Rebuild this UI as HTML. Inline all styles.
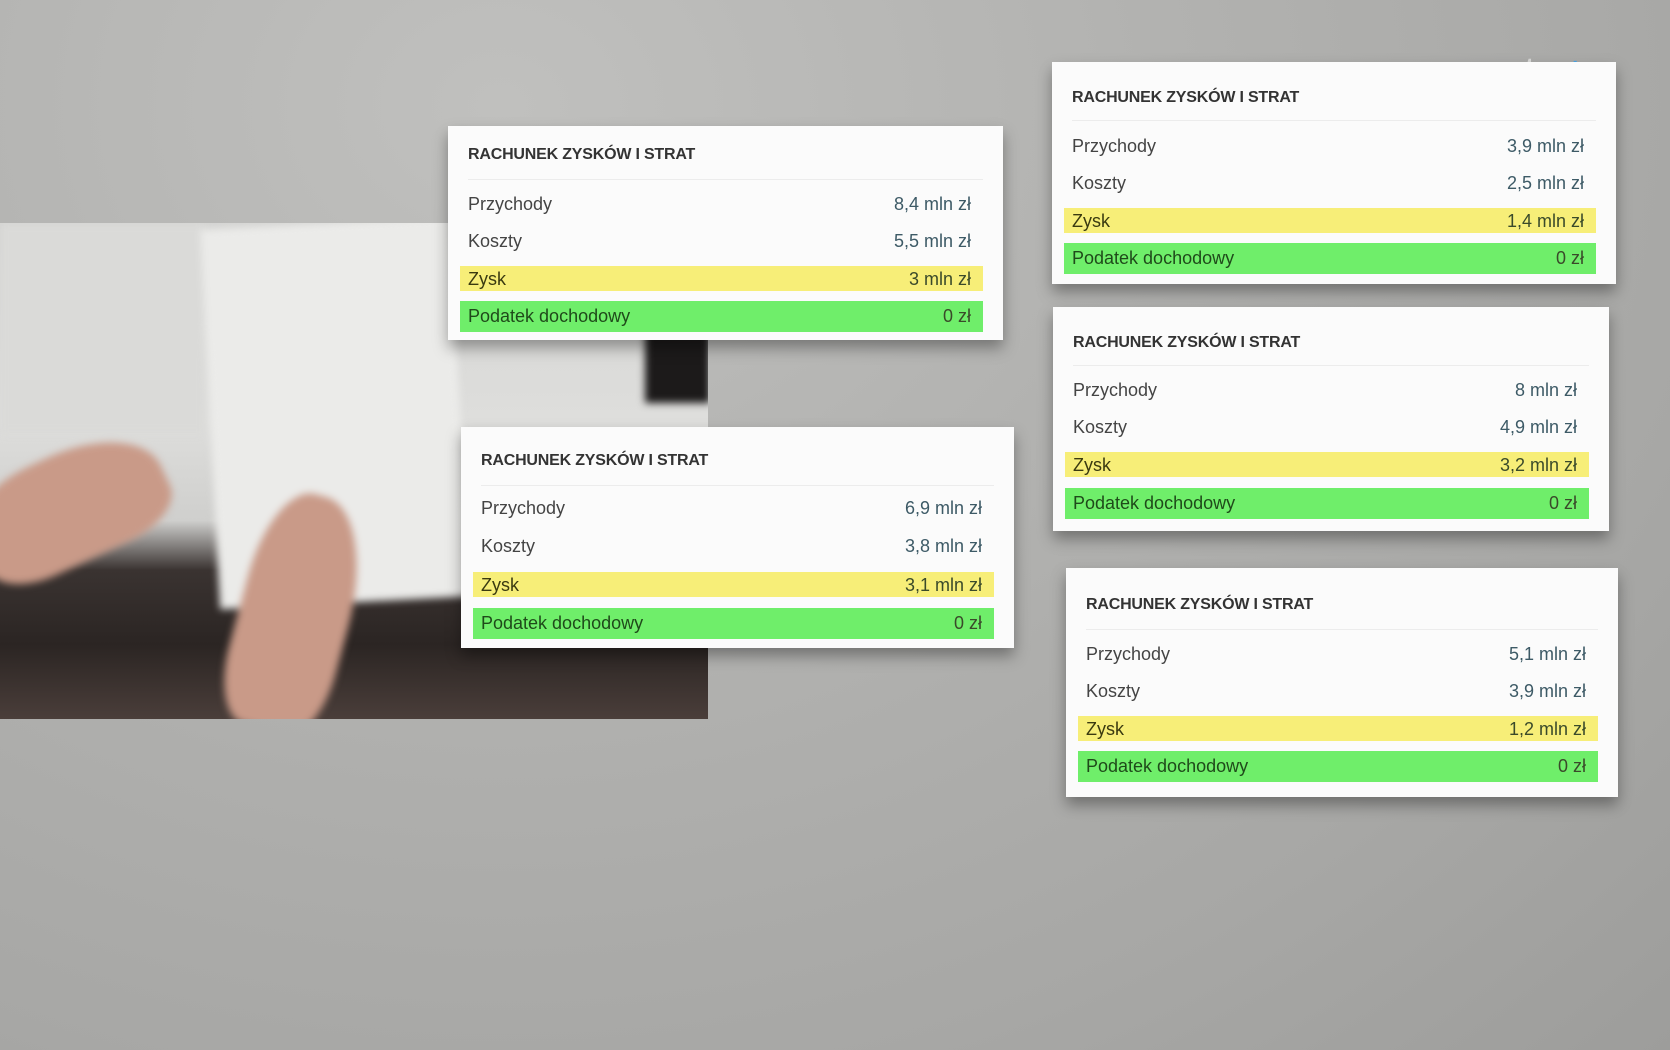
<!DOCTYPE html>
<html><head><meta charset="utf-8"><style>
*{margin:0;padding:0;box-sizing:border-box}
body{width:1670px;height:1050px;overflow:hidden;position:relative;font-family:"Liberation Sans",sans-serif;
background:radial-gradient(ellipse at 30% 10%,#c0c0be 0%,#b2b2b0 40%,#a7a7a5 75%,#9d9d9b 100%);}
.photo{position:absolute;left:0;top:223px;width:708px;height:496px;overflow:hidden;
background:linear-gradient(180deg,#d4d4d2 0%,#dededc 40%,#cfcfcd 60%,#3a3331 70%,#2b2523 85%,#4a3e3a 100%);}
.photo .in{position:absolute;inset:0;filter:blur(4px)}
.paper{position:absolute;left:210px;top:0;width:250px;height:380px;background:#ebebe9;transform:rotate(-3deg);}
.hand{position:absolute;background:#c99a88;border-radius:40% 50% 30% 30%;}
.card{position:absolute;background:#fbfbfb;box-shadow:0 8px 14px rgba(0,0,0,.35);}
.card .t{position:absolute;left:20px;top:20px;font-weight:bold;font-size:16px;color:#333;letter-spacing:-.2px}
.card .d{position:absolute;left:20px;right:20px;top:53px;height:1px;background:#ececec}
.row{position:absolute;left:12px;right:20px;height:26px;font-size:18px;line-height:26px;color:#444;padding:0 12px 0 8px;display:flex;justify-content:space-between}
.row span:last-child{color:#3d5a66}
.r1{top:65px}.r2{top:102px}
.y{top:140px;height:25px;background:#f7ee78;color:#3a3a10}
.g{top:175px;height:31px;line-height:31px;background:#6fee6a;color:#1f4a1a}
.y span:last-child,.g span:last-child{color:#3a4a2a}
.sh .t{top:27px}.sh .d{top:58px}
</style></head><body>
<div class="photo"><div class="in">
 <div class="paper" style="left:0;top:0;width:205px;height:210px;transform:none;background:#dadad8"></div>
 <div class="paper"></div>
 <div class="hand" style="left:-30px;top:230px;width:200px;height:110px;transform:rotate(-25deg)"></div>
 <div class="hand" style="left:240px;top:270px;width:110px;height:240px;transform:rotate(15deg)"></div>
 <div style="position:absolute;left:645px;top:100px;width:65px;height:80px;background:#1c1a1a"></div>
</div></div>
<div style="position:absolute;left:1525px;top:52px;color:rgba(255,255,255,.55);font-weight:bold;font-size:28px">tvn<span style="color:#4aa6e6">+</span></div>

<div class="card" style="left:448px;top:126px;width:555px;height:214px">
<div class="t">RACHUNEK ZYSKÓW I STRAT</div><div class="d"></div>
<div class="row r1"><span>Przychody</span><span>8,4 mln zł</span></div>
<div class="row r2"><span>Koszty</span><span>5,5 mln zł</span></div>
<div class="row y"><span>Zysk</span><span>3 mln zł</span></div>
<div class="row g"><span>Podatek dochodowy</span><span>0 zł</span></div></div>

<div class="card sh" style="left:461px;top:427px;width:553px;height:221px">
<div class="t" style="top:25px">RACHUNEK ZYSKÓW I STRAT</div><div class="d"></div>
<div class="row r1" style="top:68px"><span>Przychody</span><span>6,9 mln zł</span></div>
<div class="row r2" style="top:106px"><span>Koszty</span><span>3,8 mln zł</span></div>
<div class="row y" style="top:145px"><span>Zysk</span><span>3,1 mln zł</span></div>
<div class="row g" style="top:181px"><span>Podatek dochodowy</span><span>0 zł</span></div></div>

<div class="card sh" style="left:1052px;top:62px;width:564px;height:222px">
<div class="t">RACHUNEK ZYSKÓW I STRAT</div><div class="d"></div>
<div class="row r1" style="top:71px"><span>Przychody</span><span>3,9 mln zł</span></div>
<div class="row r2" style="top:108px"><span>Koszty</span><span>2,5 mln zł</span></div>
<div class="row y" style="top:146px"><span>Zysk</span><span>1,4 mln zł</span></div>
<div class="row g" style="top:181px"><span>Podatek dochodowy</span><span>0 zł</span></div></div>

<div class="card sh" style="left:1053px;top:307px;width:556px;height:224px">
<div class="t">RACHUNEK ZYSKÓW I STRAT</div><div class="d"></div>
<div class="row r1" style="top:70px"><span>Przychody</span><span>8 mln zł</span></div>
<div class="row r2" style="top:107px"><span>Koszty</span><span>4,9 mln zł</span></div>
<div class="row y" style="top:145px"><span>Zysk</span><span>3,2 mln zł</span></div>
<div class="row g" style="top:181px"><span>Podatek dochodowy</span><span>0 zł</span></div></div>

<div class="card sh" style="left:1066px;top:568px;width:552px;height:229px">
<div class="t" style="top:28px">RACHUNEK ZYSKÓW I STRAT</div><div class="d" style="top:61px"></div>
<div class="row r1" style="top:73px"><span>Przychody</span><span>5,1 mln zł</span></div>
<div class="row r2" style="top:110px"><span>Koszty</span><span>3,9 mln zł</span></div>
<div class="row y" style="top:148px"><span>Zysk</span><span>1,2 mln zł</span></div>
<div class="row g" style="top:183px"><span>Podatek dochodowy</span><span>0 zł</span></div></div>
</body></html>
